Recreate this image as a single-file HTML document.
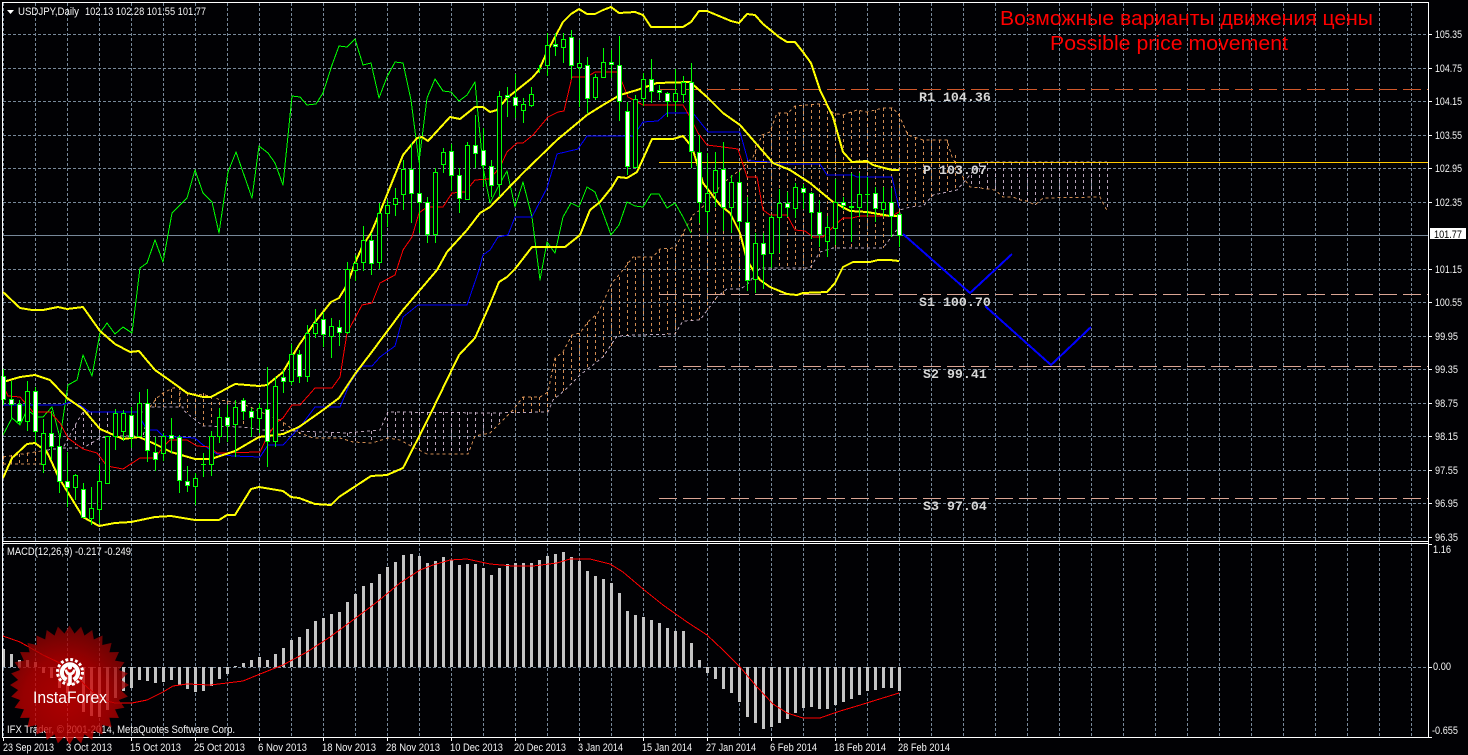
<!DOCTYPE html>
<html><head><meta charset="utf-8"><title>USDJPY,Daily</title>
<style>html,body{margin:0;padding:0;background:#010104;width:1468px;height:755px;overflow:hidden}svg{display:block}
text{font-family:"Liberation Sans",sans-serif}</style></head><body>
<svg width="1468" height="755" viewBox="0 0 1468 755" xmlns="http://www.w3.org/2000/svg">
<defs>
<pattern id="v" x="35" y="3" width="32" height="5" patternUnits="userSpaceOnUse"><rect width="1" height="3" fill="#778899"/></pattern>
<radialGradient id="lg" gradientUnits="userSpaceOnUse" cx="66" cy="700" r="78"><stop offset="0" stop-color="#dc0000"/><stop offset=".55" stop-color="#c00000"/><stop offset="1" stop-color="#7c0404"/></radialGradient>
<clipPath id="st"><circle cx="69.5" cy="685" r="51.5"/>
<polygon points="10,685 18,680 121,680 129,685 121,690 18,690"/>
<polygon points="10,685 18,680 121,680 129,685 121,690 18,690" transform="rotate(11.25 69.5 685)"/>
<polygon points="10,685 18,680 121,680 129,685 121,690 18,690" transform="rotate(22.5 69.5 685)"/>
<polygon points="10,685 18,680 121,680 129,685 121,690 18,690" transform="rotate(33.75 69.5 685)"/>
<polygon points="10,685 18,680 121,680 129,685 121,690 18,690" transform="rotate(45 69.5 685)"/>
<polygon points="10,685 18,680 121,680 129,685 121,690 18,690" transform="rotate(56.25 69.5 685)"/>
<polygon points="10,685 18,680 121,680 129,685 121,690 18,690" transform="rotate(67.5 69.5 685)"/>
<polygon points="10,685 18,680 121,680 129,685 121,690 18,690" transform="rotate(78.75 69.5 685)"/>
<polygon points="10,685 18,680 121,680 129,685 121,690 18,690" transform="rotate(90 69.5 685)"/>
<polygon points="10,685 18,680 121,680 129,685 121,690 18,690" transform="rotate(101.25 69.5 685)"/>
<polygon points="10,685 18,680 121,680 129,685 121,690 18,690" transform="rotate(112.5 69.5 685)"/>
<polygon points="10,685 18,680 121,680 129,685 121,690 18,690" transform="rotate(123.75 69.5 685)"/>
<polygon points="10,685 18,680 121,680 129,685 121,690 18,690" transform="rotate(135 69.5 685)"/>
<polygon points="10,685 18,680 121,680 129,685 121,690 18,690" transform="rotate(146.25 69.5 685)"/>
<polygon points="10,685 18,680 121,680 129,685 121,690 18,690" transform="rotate(157.5 69.5 685)"/>
<polygon points="10,685 18,680 121,680 129,685 121,690 18,690" transform="rotate(168.75 69.5 685)"/>
</clipPath>
</defs>
<rect width="1468" height="755" fill="#010104"/>
<!-- grid -->
<rect x="3" y="3" width="1425" height="538" fill="url(#v)"/>
<rect x="3" y="544" width="1425" height="193" fill="url(#v)"/>
<path shape-rendering="crispEdges" stroke="#778899" stroke-dasharray="3 2" fill="none" d="M3 34.5H1428M3 68.5H1428M3 101.5H1428M3 135.5H1428M3 168.5H1428M3 202.5H1428M3 269.5H1428M3 302.5H1428M3 336.5H1428M3 369.5H1428M3 403.5H1428M3 436.5H1428M3 470.5H1428M3 503.5H1428M3 537.5H1428M3 667.5H1428"/>
<path shape-rendering="crispEdges" stroke="#778899" d="M3 235.5H1428" fill="none"/>
<!-- cloud -->
<g fill="none" stroke-dasharray="3 3" shape-rendering="crispEdges" stroke-opacity=".85">
<path stroke="#F4A460" d="M3.5 456V464M11.5 455V464M19.5 454V464M27.5 453V464M35.5 452V464M43.5 452V464M155.5 398V407M163.5 393V407M171.5 389V407M179.5 387V407M187.5 393V412M195.5 393V418M203.5 393V426M211.5 396V426M219.5 402V426M227.5 401V427M235.5 403V427M243.5 403V427M251.5 407V428M259.5 413V429M267.5 416V430M275.5 420V431M283.5 423V431M515.5 410V413M523.5 397V412M531.5 397V412M539.5 397V412M547.5 392V412M555.5 358V398M563.5 352V391M571.5 335V384M579.5 333V375M587.5 322V368M595.5 316V362M603.5 307V357M611.5 289V346M619.5 277V336M627.5 262V336M635.5 257V335M643.5 257V335M651.5 257V335M659.5 250V334M667.5 249V334M675.5 248V334M683.5 233V321M691.5 217V321M699.5 210V320M707.5 200V310M715.5 190V300M723.5 183V294M731.5 176V289M739.5 170V289M747.5 159V285M755.5 145V275M763.5 135V268M771.5 128V268M779.5 113V268M787.5 113V268M795.5 106V268M803.5 105V268M811.5 104V268M819.5 104V260M827.5 105V250M835.5 113V248M843.5 115V248M851.5 112V248M859.5 111V248M867.5 112V248M875.5 110V248M883.5 108V248M891.5 108V235M899.5 113V215M907.5 132V206M915.5 137V206M923.5 140V206M931.5 140V197M939.5 140V193M947.5 140V191M955.5 155V190M963.5 177V182"/>
<path stroke="#D8BFD8" d="M75.5 425V445M83.5 412V448M91.5 412V447M99.5 412V438M107.5 412V437M115.5 412V436M123.5 412V436M131.5 412V436M139.5 412V436M299.5 432V434M315.5 433V437M331.5 433V439M347.5 433V439M355.5 432V442M371.5 431V443M387.5 412V438M395.5 412V438M403.5 412V440M411.5 412V445M419.5 412V450M427.5 412V454M435.5 412V454M443.5 412V454M451.5 412V454M459.5 412V454M467.5 412V454M475.5 412V436M483.5 413V433M491.5 413V430M499.5 413V424M971.5 175V187M979.5 163V188M987.5 162V189M995.5 162V190M1003.5 162V197M1011.5 162V197M1019.5 162V200M1027.5 162V201M1035.5 162V205M1043.5 162V198M1051.5 162V197M1059.5 162V197M1067.5 162V197M1075.5 162V197M1083.5 162V197M1091.5 162V197M1099.5 162V197M1107.5 162V210"/>
<polyline stroke="#F4A460" points="3,457 35,452 47,450"/>
<polyline stroke="#F4A460" points="3,464 43,464 47,450"/>
<polyline stroke="#D8BFD8" points="47,450 63,448 77,422 83,412 146,412"/>
<polyline stroke="#D8BFD8" points="63,448 83,448 100,438 113,436 143,436 150,407 183,407 183,410 203,426 243,427 262,430 295,431"/>
<polyline stroke="#F4A460" points="146,412 150,407 157,398 163,393 173,388 180,387 180,407"/>
<polyline stroke="#F4A460" points="187,393 212,396 220,400 240,403 250,407 263,413 280,420 295,431 313,438 340,438 353,442 372,443 388,438 400,440 413,447 427,454 468,454 475,436 490,433 497,426 503,420 513,410 523,397 540,397 548,392 555,358 563,352 572,335 580,333 588,322 598,313 612,283 623,270 633,257 653,257 660,249 675,248 683,233 693,215 700,210 723,183 740,170 753,157 762,135 770,132 777,113 788,113 795,106 820,104 827,105 833,113 843,115 857,110 867,112 883,108 892,108 898,113 908,135 923,140 947,140 952,157 963,177 970,187 980,188 995,190 1003,197 1013,197 1020,200 1027,201 1035,205 1043,198 1100,197 1105,207 1108,212"/>
<polyline stroke="#D8BFD8" points="295,431 347,433 380,430 388,412 490,413 548,412 553,400 565,390 580,375 603,357 617,336 637,335 675,334 683,321 700,320 717,297 727,289 740,289 747,285 760,268 810,268 820,252 833,248 883,248 899,227 900,210 910,207 923,206 933,195 957,190 970,175 980,163 987,162 1107,162"/>
</g>
<!-- pivot lines -->
<g fill="none" shape-rendering="crispEdges">
<path stroke="#D2582A" stroke-dasharray="18 6" d="M659 89.5H1428"/>
<path stroke="#FFC800" d="M659 162.5H1428"/>
<path stroke="#DBA594" stroke-dasharray="18 6" d="M659 294.5H1428M659 366.5H1428M659 498.5H1428"/>
</g>
<!-- indicators -->
<g fill="none" shape-rendering="crispEdges" stroke-linejoin="round">
<polyline stroke="#00FF00" points="3,435 12,418 20,425 27,410 37,417 43,417 52,407 60,438 68,385 77,380 83,355 92,376 100,333 107,323 115,334 123,327 132,333 140,268 147,263 155,240 163,262 172,213 187,198 195,170 203,193 212,202 219,233 228,172 236,152 252,198 259,146 268,153 275,163 283,185 292,96 300,97 307,105 316,104 323,93 332,65 339,46 347,47 355,39 363,65 371,63 379,98 387,77 395,62 403,63 411,100 419,162 427,98 435,79 443,91 451,92 459,101 467,95 475,82 483,167 490,203 499,185 507,171 515,207 523,182 532,217 540,280 547,242 555,253 563,217 571,203 579,207 587,187 595,192 603,213 611,235 619,225 627,202 635,206 643,207 651,194 659,194 667,208 675,203 683,217 691,233"/>
<polyline stroke="#0000FF" points="3,405 62,405 70,402 80,405 90,412 137,412 147,430 157,430 163,436 195,438 203,445 217,454 233,456 260,457 268,445 283,445 300,427 315,407 340,407 350,383 362,366 372,366 380,357 395,346 403,317 418,305 467,305 479,270 483,255 490,250 498,237 508,235 515,217 532,217 547,188 557,154 578,149 587,136 633,136 643,122 658,121 667,113 693,113 708,132 740,132 748,161 773,162 778,164 820,164 827,175 853,175 857,177 892,177 899,208"/>
<polyline stroke="#FF0000" points="3,385 8,396 20,397 33,412 50,412 60,423 68,438 83,449 97,453 107,466 123,469 140,458 155,458 163,447 170,440 187,440 197,446 210,447 217,453 260,452 267,437 277,422 283,418 292,405 300,405 315,388 332,388 340,377 347,333 362,305 372,303 380,283 395,275 403,250 412,237 419,213 427,207 443,207 452,193 465,192 475,180 490,179 500,167 507,152 517,143 523,143 533,135 548,117 558,112 564,111 572,77 587,77 595,72 618,72 628,97 643,105 683,105 690,117 698,133 707,145 723,147 738,149 747,177 757,177 763,210 770,215 787,215 795,230 805,231 813,237 823,237 833,227 843,218 852,218 860,216 892,216 899,212"/>
<g stroke="#FFFF00" stroke-width="2">
<polyline points="3,292 20,308 32,310 43,310 58,307 67,309 83,307 100,331 115,344 130,352 139,351 155,370 172,382 187,393 203,397 211,397 235,384 259,386 267,385 283,372 299,345 315,322 331,302 339,298 347,285 355,263 363,245 371,233 380,212 403,155 417,138 422,137 428,141 450,117 460,119 475,107 483,107 490,112 497,110 507,98 532,78 539,70 547,52 563,22 571,14 579,9 587,14 595,14 603,10 611,7 619,13 635,12 643,15 651,27 683,27 691,22 699,11 707,11 731,21 739,23 747,14 755,15 763,24 779,37 787,42 795,42 803,52 811,63 820,90 833,117 843,152 852,162 867,161 873,165 892,170 899,170"/>
<polyline points="3,382 20,377 35,375 50,380 67,398 83,409 100,429 123,439 139,437 155,444 171,452 195,459 211,459 235,451 259,437 275,435 283,434 299,427 323,410 339,398 355,374 371,353 403,310 437,270 447,252 467,230 480,213 490,207 523,173 557,140 587,115 603,105 620,95 637,90 657,83 690,82 707,97 723,113 740,125 773,163 790,170 810,183 833,202 850,211 867,212 890,216 899,216"/>
<polyline points="3,478 12,458 27,444 35,443 47,452 59,478 83,517 99,526 115,523 131,522 155,517 171,516 195,520 219,520 227,515 235,515 251,489 259,487 283,491 291,497 299,498 315,504 331,505 339,497 371,476 387,475 403,468 427,421 459,355 475,338 490,304 499,282 507,277 515,269 532,247 565,247 580,235 590,210 600,202 612,187 618,177 627,178 637,172 652,139 673,139 683,136 692,147 700,173 703,183 720,205 730,213 740,233 747,260 753,270 760,280 770,287 787,294 797,295 803,293 827,292 835,283 843,267 853,262 870,262 878,260 890,260 899,261"/>
</g>
</g>
<!-- candles -->
<g shape-rendering="crispEdges">
<path stroke="#00FF00" fill="none" d="M3.5 369V405M11.5 381V418M19.5 400V425M27.5 381V431M35.5 387V442M43.5 419V473M51.5 411V460M59.5 437V493M67.5 452V507M75.5 474V500M83.5 483V518M91.5 487V525M99.5 465V523M107.5 436V483M115.5 409V450M123.5 410V441M131.5 407V448M139.5 392V437M147.5 389V462M155.5 437V471M163.5 433V461M171.5 418V453M179.5 435V493M187.5 466V492M195.5 473V505M203.5 453V477M201 464.5H206M211.5 431V476M219.5 408V443M227.5 405V442M235.5 400V457M243.5 398V420M251.5 408V437M259.5 403V433M267.5 367V467M275.5 377V447M283.5 370V393M291.5 344V385M299.5 350V383M307.5 325V382M315.5 309V338M323.5 312V347M331.5 318V358M339.5 320V346M347.5 262V334M355.5 255V281M363.5 226V271M371.5 233V275M379.5 203V269M387.5 200V227M395.5 188V216M403.5 160V210M411.5 143V223M419.5 137V233M427.5 197V243M435.5 168V243M443.5 148V173M451.5 144V191M459.5 168V213M467.5 142V200M475.5 115V168M483.5 128V187M491.5 160V197M499.5 91V197M507.5 87V117M515.5 74V118M523.5 98V123M531.5 87V107M539.5 65V73M537 68.5H542M547.5 33V76M555.5 33V56M563.5 33V63M571.5 30V79M579.5 40V107M587.5 57V113M595.5 74V100M603.5 48V78M611.5 50V78M619.5 36V121M627.5 102V175M635.5 95V168M643.5 73V106M651.5 59V103M659.5 85V100M667.5 92V117M675.5 69V112M683.5 76V103M691.5 63V168M699.5 135V223M707.5 153V233M715.5 152V207M723.5 142V231M731.5 175V233M739.5 172V230M747.5 197V291M755.5 233V293M763.5 233V289M771.5 215V268M779.5 189V253M787.5 192V217M795.5 183V218M803.5 184V209M811.5 192V239M819.5 200V247M827.5 216V257M835.5 179V245M843.5 197V210M851.5 173V242M859.5 173V217M867.5 177V217M865 194.5H870M875.5 187V222M883.5 187V217M891.5 188V237M899.5 212V247"/>
<path stroke="#00FF00" fill="#000" d="M25.5 391.5h4v30h-4zM41.5 433.5h4v31h-4zM73.5 475.5h4v12h-4zM89.5 508.5h4v10h-4zM97.5 481.5h4v28h-4zM105.5 436.5h4v47h-4zM113.5 413.5h4v23h-4zM121.5 413.5h4v18h-4zM137.5 403.5h4v33h-4zM161.5 436.5h4v17h-4zM193.5 478.5h4v8h-4zM209.5 436.5h4v28h-4zM217.5 417.5h4v19h-4zM233.5 407.5h4v17h-4zM257.5 408.5h4v10h-4zM273.5 386.5h4v55h-4zM289.5 354.5h4v27h-4zM305.5 333.5h4v43h-4zM313.5 323.5h4v10h-4zM329.5 326.5h4v10h-4zM345.5 269.5h4v63h-4zM353.5 263.5h4v7h-4zM361.5 240.5h4v22h-4zM377.5 213.5h4v49h-4zM385.5 205.5h4v8h-4zM393.5 198.5h4v6h-4zM401.5 169.5h4v25h-4zM433.5 172.5h4v62h-4zM441.5 152.5h4v12h-4zM465.5 145.5h4v54h-4zM497.5 96.5h4v88h-4zM521.5 104.5h4v6h-4zM529.5 94.5h4v11h-4zM545.5 45.5h4v20h-4zM561.5 39.5h4v8h-4zM577.5 63.5h4v4h-4zM593.5 77.5h4v20h-4zM601.5 62.5h4v15h-4zM633.5 99.5h4v68h-4zM641.5 79.5h4v19h-4zM673.5 93.5h4v8h-4zM681.5 82.5h4v12h-4zM705.5 193.5h4v18h-4zM713.5 170.5h4v22h-4zM729.5 182.5h4v25h-4zM753.5 243.5h4v36h-4zM769.5 217.5h4v36h-4zM777.5 203.5h4v14h-4zM793.5 187.5h4v21h-4zM825.5 227.5h4v14h-4zM833.5 202.5h4v26h-4zM857.5 194.5h4v13h-4zM881.5 202.5h4v7h-4z"/>
<path stroke="#00FF00" fill="#fff" d="M1.5 376.5h4v23h-4zM9.5 399.5h4v5h-4zM17.5 404.5h4v17h-4zM33.5 391.5h4v40h-4zM49.5 433.5h4v13h-4zM57.5 446.5h4v35h-4zM65.5 481.5h4v6h-4zM81.5 489.5h4v28h-4zM129.5 415.5h4v22h-4zM145.5 403.5h4v47h-4zM153.5 452.5h4v7h-4zM169.5 435.5h4v3h-4zM177.5 437.5h4v43h-4zM185.5 481.5h4v4h-4zM225.5 417.5h4v8h-4zM241.5 400.5h4v11h-4zM249.5 411.5h4v6h-4zM265.5 409.5h4v32h-4zM281.5 377.5h4v4h-4zM297.5 354.5h4v22h-4zM321.5 319.5h4v15h-4zM337.5 327.5h4v5h-4zM369.5 240.5h4v23h-4zM409.5 169.5h4v24h-4zM417.5 193.5h4v9h-4zM425.5 202.5h4v32h-4zM449.5 151.5h4v24h-4zM457.5 175.5h4v23h-4zM473.5 145.5h4v8h-4zM481.5 150.5h4v15h-4zM489.5 166.5h4v19h-4zM505.5 95.5h4v2h-4zM513.5 97.5h4v8h-4zM553.5 44.5h4v2h-4zM569.5 37.5h4v28h-4zM585.5 65.5h4v33h-4zM609.5 62.5h4v2h-4zM617.5 65.5h4v36h-4zM625.5 111.5h4v55h-4zM649.5 79.5h4v12h-4zM657.5 90.5h4v2h-4zM665.5 93.5h4v8h-4zM689.5 82.5h4v69h-4zM697.5 152.5h4v50h-4zM721.5 169.5h4v38h-4zM737.5 182.5h4v39h-4zM745.5 222.5h4v58h-4zM761.5 243.5h4v11h-4zM785.5 203.5h4v4h-4zM801.5 188.5h4v4h-4zM809.5 193.5h4v19h-4zM817.5 212.5h4v22h-4zM841.5 202.5h4v3h-4zM849.5 206.5h4v1h-4zM873.5 193.5h4v15h-4zM889.5 202.5h4v14h-4zM897.5 214.5h4v21h-4z"/>
</g>
<!-- forecast -->
<g fill="none" stroke="#0000FF" stroke-width="2" shape-rendering="crispEdges">
<polyline points="903,234 970,293 1012,254"/>
<polyline points="985,306 1051,365 1091,327"/>
</g>
<!-- level labels -->
<g font-size="13.3" font-weight="700" fill="#d6d6d6">
<text x="919" y="101" style="font-family:'Liberation Mono',monospace">R1 104.36</text>
<text x="923" y="174" style="font-family:'Liberation Mono',monospace">P 103.07</text>
<text x="919" y="306" style="font-family:'Liberation Mono',monospace">S1 100.70</text>
<text x="923" y="378" style="font-family:'Liberation Mono',monospace">S2 99.41</text>
<text x="923" y="510" style="font-family:'Liberation Mono',monospace">S3 97.04</text>
</g>
<text x="1000" y="25" font-size="20" fill="#FF0000" textLength="373" lengthAdjust="spacingAndGlyphs">Возможные варианты движения цены</text>
<text x="1050" y="50" font-size="20" fill="#FF0000" textLength="238" lengthAdjust="spacingAndGlyphs">Possible price movement</text>
<!-- macd -->
<g shape-rendering="crispEdges" fill="none" stroke="#C4C4C4" stroke-width="3">
<path d="M3.5 649V667M11.5 654V667M19.5 660V667M27.5 660V667M35.5 662V667M43.5 667V673M51.5 667V678M59.5 667V688M67.5 667V693M75.5 667V684M83.5 667V712M91.5 667V716M99.5 667V717M107.5 667V710M115.5 667V698M123.5 667V691M131.5 667V688M139.5 667V680M147.5 667V681M155.5 667V683M163.5 667V682M171.5 667V680M179.5 667V685M187.5 667V689M195.5 667V692M203.5 667V691M211.5 667V686M219.5 667V679M227.5 667V674M235.5 666V667M243.5 663V667M251.5 660V667M259.5 657V667M267.5 660V667M275.5 654V667M283.5 648V667M291.5 640V667M299.5 637V667M307.5 629V667M315.5 621V667M323.5 618V667M331.5 614V667M339.5 612V667M347.5 602V667M355.5 594V667M363.5 586V667M371.5 583V667M379.5 574V667M387.5 567V667M395.5 562V667M403.5 555V667M411.5 554V667M419.5 556V667M427.5 563V667M435.5 561V667M443.5 557V667M451.5 560V667M459.5 565V667M467.5 564V667M475.5 564V667M483.5 568V667M491.5 575V667M499.5 568V667M507.5 564V667M515.5 563V667M523.5 563V667M531.5 563V667M539.5 560V667M547.5 556V667M555.5 554V667M563.5 552V667M571.5 557V667M579.5 561V667M587.5 571V667M595.5 576V667M603.5 579V667M611.5 583V667M619.5 593V667M627.5 611V667M635.5 615V667M643.5 617V667M651.5 620V667M659.5 623V667M667.5 628V667M675.5 631V667M683.5 631V667M691.5 643V667M699.5 660V667M707.5 667V673M715.5 667V679M723.5 667V689M731.5 667V693M739.5 667V702M747.5 667V717M755.5 667V723M763.5 667V729M771.5 667V727M779.5 667V723M787.5 667V719M795.5 667V713M803.5 667V708M811.5 667V707M819.5 667V709M827.5 667V709M835.5 667V705M843.5 667V702M851.5 667V699M859.5 667V695M867.5 667V691M875.5 667V690M883.5 667V688M891.5 667V688M899.5 667V691"/>
</g>
<polyline fill="none" stroke="#FF0000" shape-rendering="crispEdges" points="3,636 20,642 43,655 60,663 77,677 88,688 103,700 115,703 132,703 147,700 163,692 173,686 187,684 210,685 227,683 243,681 260,674 283,665 307,652 330,637 353,620 377,602 400,583 420,570 433,565 450,560 467,559 490,564 513,566 533,566 557,563 570,559 590,559 610,564 623,572 643,589 663,605 687,622 707,635 723,650 740,667 757,687 773,704 787,713 803,718 820,718 837,712 857,706 899,693"/>
<!-- borders -->
<path shape-rendering="crispEdges" fill="none" stroke="#fff" d="M2.5 2.5H1428.5V737.5H2.5ZM3 541.5H1428M3 543.5H1428M3.5 738V741M67.5 738V741M131.5 738V741M195.5 738V741M259.5 738V741M323.5 738V741M387.5 738V741M451.5 738V741M515.5 738V741M579.5 738V741M643.5 738V741M707.5 738V741M771.5 738V741M835.5 738V741M899.5 738V741M1429 34.5H1432M1429 68.5H1432M1429 101.5H1432M1429 135.5H1432M1429 168.5H1432M1429 202.5H1432M1429 269.5H1432M1429 302.5H1432M1429 336.5H1432M1429 369.5H1432M1429 403.5H1432M1429 436.5H1432M1429 470.5H1432M1429 503.5H1432M1429 537.5H1432M1429 544.5H1432M1429 667.5H1432M1429 737.5H1432"/>
<!-- header text -->
<polygon points="7,10 14,10 10.500,14" fill="#fff"/>
<g font-size="11" fill="#f4f4f4">
<text x="18" y="15" textLength="61" lengthAdjust="spacingAndGlyphs">USDJPY,Daily</text>
<text x="85" y="15" textLength="121" lengthAdjust="spacingAndGlyphs">102.13 102.28 101.55 101.77</text>
<text x="7" y="555" textLength="124" lengthAdjust="spacingAndGlyphs">MACD(12,26,9) -0.217 -0.249</text>
<text x="7" y="733" textLength="228" lengthAdjust="spacingAndGlyphs">IFX Trader, © 2001-2014, MetaQuotes Software Corp.</text>
</g>
<!-- right axis -->
<g font-size="11" fill="#f4f4f4">
<text x="1435" y="38" textLength="27" lengthAdjust="spacingAndGlyphs">105.35</text>
<text x="1435" y="72" textLength="27" lengthAdjust="spacingAndGlyphs">104.75</text>
<text x="1435" y="105" textLength="27" lengthAdjust="spacingAndGlyphs">104.15</text>
<text x="1435" y="139" textLength="27" lengthAdjust="spacingAndGlyphs">103.55</text>
<text x="1435" y="172" textLength="27" lengthAdjust="spacingAndGlyphs">102.95</text>
<text x="1435" y="206" textLength="27" lengthAdjust="spacingAndGlyphs">102.35</text>
<text x="1435" y="273" textLength="27" lengthAdjust="spacingAndGlyphs">101.15</text>
<text x="1435" y="306" textLength="27" lengthAdjust="spacingAndGlyphs">100.55</text>
<text x="1435" y="340" textLength="23" lengthAdjust="spacingAndGlyphs">99.95</text>
<text x="1435" y="373" textLength="23" lengthAdjust="spacingAndGlyphs">99.35</text>
<text x="1435" y="407" textLength="23" lengthAdjust="spacingAndGlyphs">98.75</text>
<text x="1435" y="440" textLength="23" lengthAdjust="spacingAndGlyphs">98.15</text>
<text x="1435" y="474" textLength="23" lengthAdjust="spacingAndGlyphs">97.55</text>
<text x="1435" y="507" textLength="23" lengthAdjust="spacingAndGlyphs">96.95</text>
<text x="1435" y="541" textLength="23" lengthAdjust="spacingAndGlyphs">96.35</text>
<text x="1433" y="553" textLength="18" lengthAdjust="spacingAndGlyphs">1.16</text>
<text x="1433" y="670" textLength="18" lengthAdjust="spacingAndGlyphs">0.00</text>
<text x="1432" y="734" textLength="26" lengthAdjust="spacingAndGlyphs">-0.655</text>
</g>
<rect x="1430" y="228" width="36" height="11" fill="#fff"/>
<text x="1434" y="238" font-size="11" fill="#000" textLength="28" lengthAdjust="spacingAndGlyphs">101.77</text>
<!-- date axis -->
<g font-size="11" fill="#f4f4f4">
<text x="3" y="751" textLength="51" lengthAdjust="spacingAndGlyphs">23 Sep 2013</text>
<text x="66" y="751" textLength="46" lengthAdjust="spacingAndGlyphs">3 Oct 2013</text>
<text x="130" y="751" textLength="51" lengthAdjust="spacingAndGlyphs">15 Oct 2013</text>
<text x="194" y="751" textLength="51" lengthAdjust="spacingAndGlyphs">25 Oct 2013</text>
<text x="258" y="751" textLength="49" lengthAdjust="spacingAndGlyphs">6 Nov 2013</text>
<text x="322" y="751" textLength="54" lengthAdjust="spacingAndGlyphs">18 Nov 2013</text>
<text x="386" y="751" textLength="54" lengthAdjust="spacingAndGlyphs">28 Nov 2013</text>
<text x="450" y="751" textLength="53" lengthAdjust="spacingAndGlyphs">10 Dec 2013</text>
<text x="514" y="751" textLength="52" lengthAdjust="spacingAndGlyphs">20 Dec 2013</text>
<text x="578" y="751" textLength="45" lengthAdjust="spacingAndGlyphs">3 Jan 2014</text>
<text x="642" y="751" textLength="50" lengthAdjust="spacingAndGlyphs">15 Jan 2014</text>
<text x="706" y="751" textLength="50" lengthAdjust="spacingAndGlyphs">27 Jan 2014</text>
<text x="770" y="751" textLength="47" lengthAdjust="spacingAndGlyphs">6 Feb 2014</text>
<text x="834" y="751" textLength="52" lengthAdjust="spacingAndGlyphs">18 Feb 2014</text>
<text x="898" y="751" textLength="52" lengthAdjust="spacingAndGlyphs">28 Feb 2014</text>
</g>
<!-- logo -->
<rect x="0" y="620" width="140" height="130" fill="url(#lg)" opacity=".78" clip-path="url(#st)"/>
<g fill="#fff">
<circle cx="70" cy="672" r="12.500" fill="none" stroke="#fff" stroke-width="3" stroke-dasharray="2.800 2.100"/>
<path d="M70 663a9.500 9.500 0 0 1 5 17.500l-1.500-2.300a6.800 6.800 0 1 0-7 0L65 680.500A9.500 9.500 0 0 1 70 663Z" stroke="#fff" stroke-width="1.500"/>
<circle cx="70" cy="667.500" r="2"/>
<path d="M64.500 669.500h2.500c.5 2 1.500 3 3 3s2.500-1 3-3h2.500c-.3 3-1.800 5-3.700 5.700V685h-3.600V675.200c-1.900-.7-3.400-2.700-3.700-5.700Z"/>
</g>
<text x="33" y="703" font-size="17" fill="#fff" textLength="74" lengthAdjust="spacingAndGlyphs">InstaForex</text>
</svg>
</body></html>
